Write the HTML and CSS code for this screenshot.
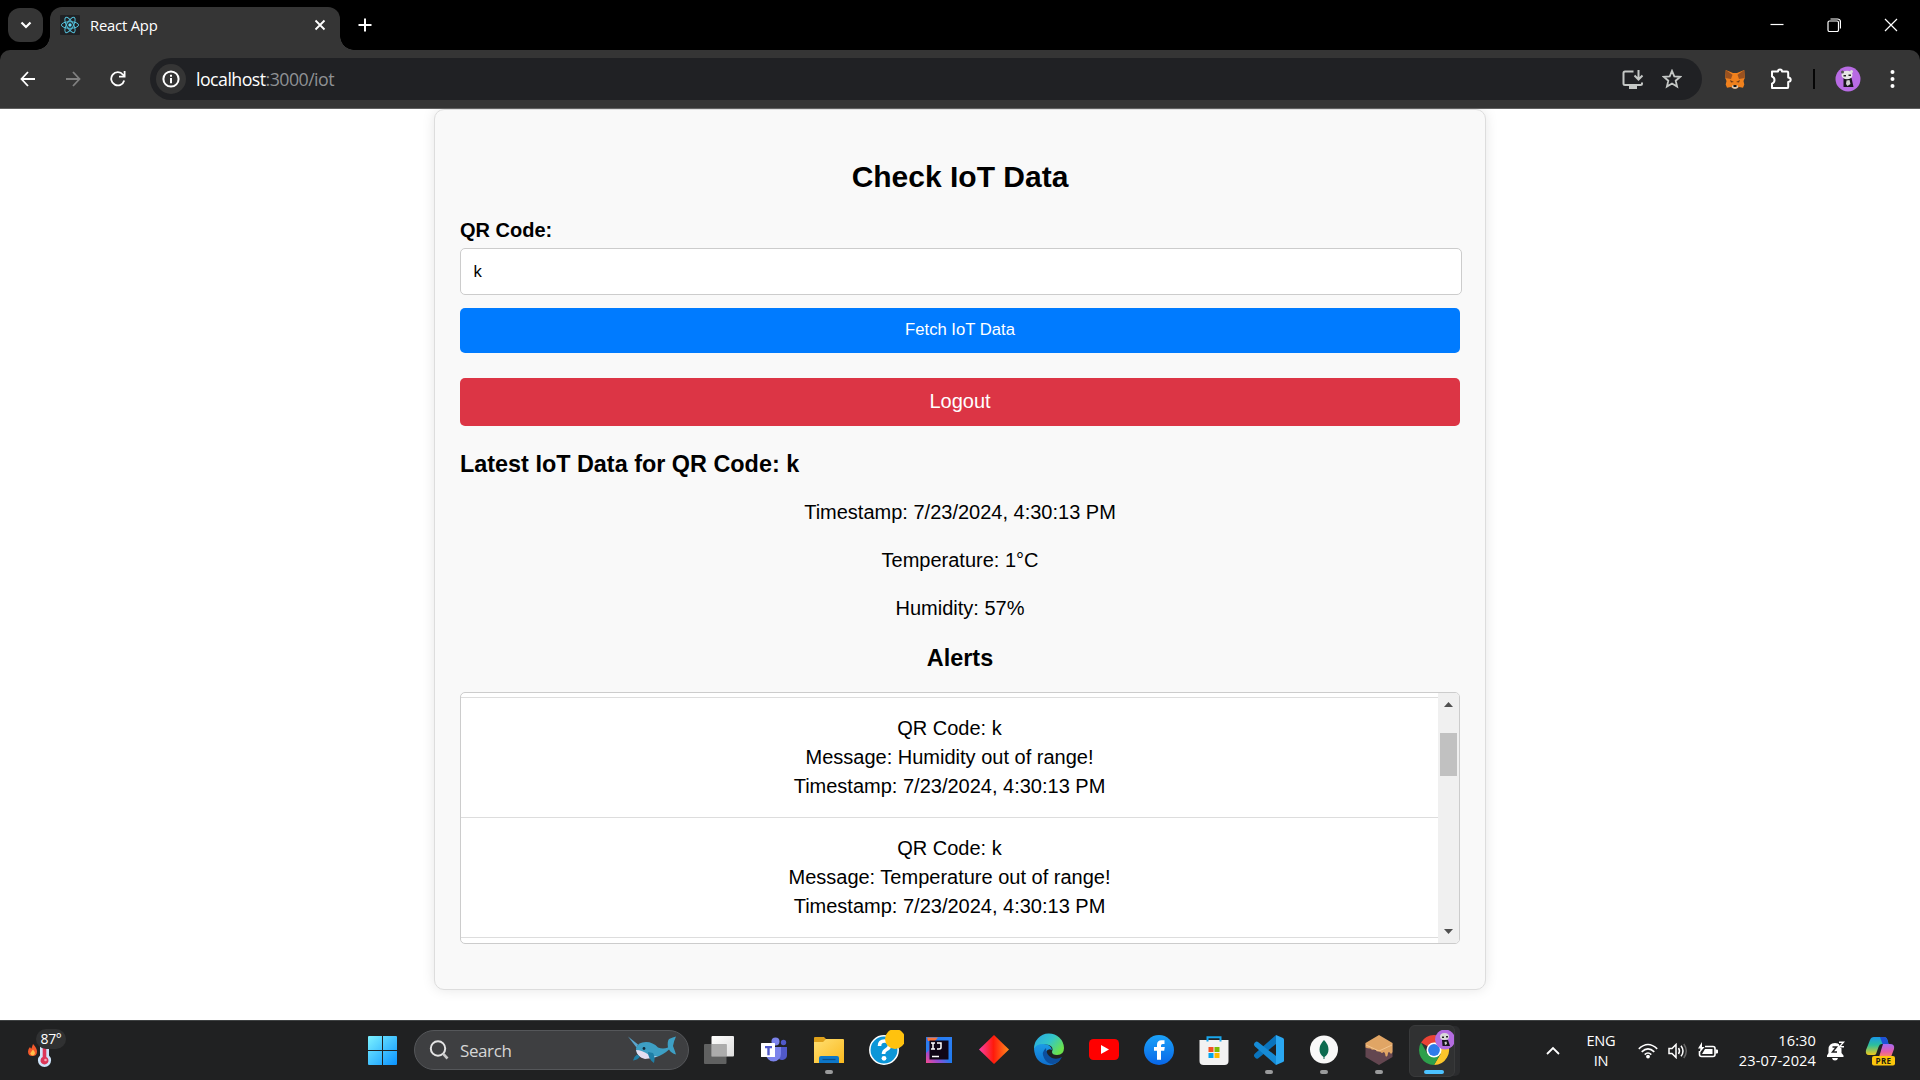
FILE: index.html
```html
<!DOCTYPE html>
<html lang="en">
<head>
<meta charset="utf-8">
<title>React App</title>
<link rel="stylesheet" href="styles.css">
</head>
<body>
<div class="tabstrip">
  <div class="tab-search"><svg width="12" height="8" viewBox="0 0 12 8"><path d="M1.5 1.5 6 6l4.500-4.500" fill="none" stroke="#fff" stroke-width="2.200"/></svg></div>
  <div class="tab">
    <svg class="favicon" width="20" height="20" viewBox="0 0 20 20"><rect width="20" height="20" rx="1" fill="#202124"/><g fill="none" stroke="#53bfd9" stroke-width="1"><ellipse cx="10" cy="10" rx="8.600" ry="3.300"/><ellipse cx="10" cy="10" rx="8.600" ry="3.300" transform="rotate(60 10 10)"/><ellipse cx="10" cy="10" rx="8.600" ry="3.300" transform="rotate(120 10 10)"/></g><circle cx="10" cy="10" r="1.700" fill="#61dafb"/></svg>
    <span class="tab-title">React App</span>
    <svg class="tab-close" width="12" height="12" viewBox="0 0 12 12"><path d="M1.500 1.500l9 9M10.500 1.500l-9 9" stroke="#fff" stroke-width="1.800"/></svg>
  </div>
  <svg class="new-tab" width="14" height="14" viewBox="0 0 14 14"><path d="M7 .5v13M.5 7h13" stroke="#fff" stroke-width="2"/></svg>
  <div class="window-buttons">
    <svg width="14" height="14" viewBox="0 0 14 14"><path d="M.5 6.500h13" stroke="#fff" stroke-width="1.200"/></svg>
    <svg width="14" height="14" viewBox="0 0 14 14"><path d="M3.500 1h7a3 3 0 0 1 3 3v6.500" fill="none" stroke="#fff" stroke-width="1.200"/><rect x="1" y="3" width="10.500" height="10.500" rx="1.500" fill="none" stroke="#fff" stroke-width="1.200"/></svg>
    <svg width="14" height="14" viewBox="0 0 14 14"><path d="M1 1l12 12M13 1L1 13" stroke="#fff" stroke-width="1.200"/></svg>
  </div>
</div>
<div class="toolbar-wrap">
<div class="toolbar">
  <svg class="nav" width="16" height="16" viewBox="0 0 16 16"><path d="M8 1L1.500 8 8 15M1.500 8H15" fill="none" stroke="#fff" stroke-width="1.800"/></svg>
  <svg class="nav" width="16" height="16" viewBox="0 0 16 16"><path d="M8 1l6.500 7L8 15M14.500 8H1" fill="none" stroke="#808080" stroke-width="1.800"/></svg>
  <svg class="nav" width="16" height="16" viewBox="0 0 16 16"><path d="M14.200 9.500A6.600 6.600 0 1 1 13 3.700L14.500 5.500" fill="none" stroke="#fff" stroke-width="1.800"/><path d="M15.500 0v6.500H9V4.800h4.700V0z" fill="#fff"/></svg>
  <div class="omnibox">
    <div class="info"><svg width="18" height="18" viewBox="0 0 18 18"><circle cx="9" cy="9" r="7.600" fill="none" stroke="#fff" stroke-width="2"/><path d="M9 8v5.300M9 4.700v2" stroke="#fff" stroke-width="2"/></svg></div>
    <span class="url">localhost<span class="path">:3000/iot</span></span>
    <svg class="install" width="22" height="19" viewBox="0 0 22 19"><path d="M11.500 1.500H3Q1.500 1.500 1.500 3v10.500Q1.500 15 3 15h15.500q1.500 0 1.500-1.500V12.500" fill="none" stroke="#c4c7c5" stroke-width="2"/><path d="M7 15h8v4H7z" fill="#c4c7c5"/><path d="M16.500 0v9M12.500 5.500l4 4 4-4" fill="none" stroke="#c4c7c5" stroke-width="2"/></svg>
    <svg class="star" width="20" height="20" viewBox="0 0 20 20"><path d="M10 1.800l2.300 5.500 6 .5-4.600 3.900 1.400 5.900L10 14.500l-5.100 3.100 1.400-5.900L1.700 7.800l6-.5z" fill="none" stroke="#c4c7c5" stroke-width="1.800"/></svg>
  </div>
  <svg class="fox" width="20" height="20" viewBox="0 0 20 20"><path d="M.8 1L8 4h4l7.200-3 .6 8-1.300 3 .8 3.500-1.300 3.300-4-.8-2 1.500H8L6 18l-4 .8L.7 15.500 1.500 12 .2 9z" fill="#f0811d"/><path d="M.8 1l6.700 4.700L6 10 .2 9zM19.200 1l-6.700 4.700L14 10l5.800-1z" fill="#9a5220"/><path d="M5 11l4 2-3 .5zM15 11l-4 2 3 .5z" fill="#713d18"/><path d="M7 16.500h6v2L11 19.700H9l-2-1.200z" fill="#d8c9b8"/><path d="M8.500 16h3v2h-3z" fill="#161616"/></svg>
  <svg class="puzzle" width="22" height="22" viewBox="0 0 22 22"><path d="M2 3.500h6Q8 1.500 10 1.500T12 3.500h5q1.200 0 1.200 1.200V9.500q2.500.3 2.500 2.200t-2.500 2.200v5q0 1.200-1.200 1.200H2v-4.500q2.500-1 2.500-3.600T2 8.500z" fill="none" stroke="#fff" stroke-width="2" stroke-linejoin="round"/></svg>
  <div class="separator"></div>
  <svg class="profile" width="26" height="26" viewBox="0 0 26 26"><circle cx="13" cy="13" r="12.500" fill="#b86be4"/><path d="M8.500 12h8l2 9h-10z" fill="#17151c"/><ellipse cx="12" cy="9" rx="5.500" ry="4.300" fill="#e6e6e6"/><circle cx="7.500" cy="6" r="1.500" fill="#555"/><circle cx="16.500" cy="5.500" r="1.500" fill="#ddd"/><path d="M8.500 9h2.500v1.500H8.500zM13.500 8.500h2.500v1.500h-2.500z" fill="#222"/><path d="M11.500 14.500l3-.5 1 4-3 2-1.500-2z" fill="#d0d0d0"/></svg>
  <svg class="kebab" width="5" height="20" viewBox="0 0 5 20"><g fill="#fff"><circle cx="2.500" cy="3" r="2"/><circle cx="2.500" cy="10" r="2"/><circle cx="2.500" cy="17" r="2"/></g></svg>
</div>
</div>

<main class="page">
  <section class="card">
    <h2 class="title">Check IoT Data</h2>
    <label class="label" for="qr">QR Code:</label>
    <input class="field" id="qr" type="text" value="k">
    <button class="btn btn-fetch">Fetch IoT Data</button>
    <button class="btn btn-logout">Logout</button>
    <h3 class="subtitle">Latest IoT Data for QR Code: k</h3>
    <p class="reading">Timestamp: 7/23/2024, 4:30:13 PM</p>
    <p class="reading">Temperature: 1°C</p>
    <p class="reading">Humidity: 57%</p>
    <h3 class="alerts-title">Alerts</h3>
    <div class="alerts">
      <div class="alerts-list">
        <div class="alert-end"></div>
        <div class="alert">QR Code: k<br>Message: Humidity out of range!<br>Timestamp: 7/23/2024, 4:30:13 PM</div>
        <div class="alert">QR Code: k<br>Message: Temperature out of range!<br>Timestamp: 7/23/2024, 4:30:13 PM</div>
      </div>
      <div class="scrollbar">
        <svg class="arrow-up" width="9" height="5" viewBox="0 0 9 5"><path d="M0 5L4.500 0 9 5z" fill="#505050"/></svg>
        <div class="thumb"></div>
        <svg class="arrow-down" width="9" height="5" viewBox="0 0 9 5"><path d="M0 0l4.500 5L9 0z" fill="#505050"/></svg>
      </div>
    </div>
  </section>
</main>

<footer class="taskbar">
  <div class="weather">
    <svg width="26" height="36" viewBox="0 0 26 36"><path d="M5 11q4 4 4 7.500Q9 23 4.500 23T0 18.500Q0 16 2 14q1 2 1.500 1.500Q4 14 5 11z" fill="#f2592b"/><path d="M5 16.500q2.500 2.500 1.800 4.500-.8 1.500-2.300 1.500T2.200 20.500Q3 19 5 16.500z" fill="#ffc04a"/><path d="M12 12h9v10.500a6.600 6.600 0 1 1-9 0z" fill="#cfe4fa"/><path d="M14.700 12h3.600v12a4 4 0 1 1-3.600 0z" fill="#dc3658"/><circle cx="17.500" cy="27" r="1.300" fill="#f6a5b6"/></svg>
    <span class="temp">87°</span>
  </div>
  <svg class="start" width="29" height="29" viewBox="0 0 29 29"><defs><linearGradient id="win" gradientUnits="userSpaceOnUse" x1="0" y1="0" x2="29" y2="29"><stop offset="0" stop-color="#7cf2ff"/><stop offset="1" stop-color="#0a93ff"/></linearGradient></defs><path d="M0 1q0-1 1-1h13v14H0zM15 0h13q1 0 1 1v13H15zM0 15h14v14H1q-1 0-1-1zM15 15h14v13q0 1-1 1H15z" fill="url(#win)"/></svg>
  <div class="search">
    <svg width="20" height="20" viewBox="0 0 20 20"><circle cx="9" cy="8.500" r="7.200" fill="none" stroke="#e4e4e4" stroke-width="2"/><path d="M14 13.700l4.500 4.800" stroke="#c9c9c9" stroke-width="2.600"/></svg>
    <span class="search-text">Search</span>
    <svg class="whale" width="50" height="30" viewBox="0 0 50 30"><path d="M1 1.500l10 8-1.500 3z" fill="#5aa7d0"/><path d="M9 13q2-6 10-6 7 0 12 5.500 5 2 10 0-1-6 1-8.500 4-2 7-2.500-2 4-3 9.500 2 5 3 8.500-5-1.500-7-5-5 5-14 8-11 2-16-2.500-3-2-3-7z" fill="#3d9fc4"/><path d="M9 15q6 0 13 5 3 2 9 1-6 3-13 3-8-2-9-9z" fill="#e3ddf0"/><path d="M10 19.500q-3 2-4 6 5-.5 7-4zM21 17q0 7 6 11 1.500-6-1-10z" fill="#1f7fa6"/><circle cx="17" cy="13.500" r="1.400" fill="#112b3c"/></svg>
  </div>
  <div class="apps">
    <div class="app"><svg width="40" height="40" viewBox="0 0 40 40"><defs><linearGradient id="tv" x2="1" y2="1"><stop stop-color="#fff"/><stop offset="1" stop-color="#ddd"/></linearGradient></defs><rect x="12.500" y="6" width="22.500" height="20.500" rx="1" fill="url(#tv)"/><rect x="5" y="14" width="22.500" height="20" rx="1" fill="#6f6f6f" opacity=".82"/><path d="M12.500 14h15v12.500h-15z" fill="#acacac"/></svg></div>
    <div class="app"><svg width="40" height="40" viewBox="0 0 40 40"><circle cx="21.500" cy="11.500" r="4" fill="#7b83eb"/><circle cx="29.500" cy="12.500" r="2.700" fill="#5059c9"/><path d="M24 17h9v8a5 5 0 0 1-9 3z" fill="#5059c9"/><path d="M12 17h15v7a7.500 7.500 0 0 1-15 0z" fill="#7b83eb"/><rect x="7" y="13" width="14" height="14" rx=".5" fill="#fff"/><path d="M11 16h7v2.200h-2.300v7h-2.400v-7H11z" fill="#5059c9"/></svg></div>
    <div class="app"><svg width="40" height="40" viewBox="0 0 40 40"><defs><linearGradient id="fd" x2="1" y2="1"><stop stop-color="#ffdf71"/><stop offset="1" stop-color="#fbb91e"/></linearGradient></defs><path d="M5 8q0-1 1-1h9l3 3-3 4H5z" fill="#dfa11a"/><path d="M5 12h9l3-3h17q1 0 1 1v23H5z" fill="url(#fd)"/><path d="M10 33v-5q0-2 2-2h16q2 0 2 2v5z" fill="#0d77c9"/><path d="M13.500 29.500h13" stroke="#0b4e88" stroke-width="1.200"/></svg><i class="running"></i></div>
    <div class="app"><svg width="40" height="40" viewBox="0 0 40 40"><circle cx="20" cy="20" r="14.200" fill="#0b96d8" stroke="#fff" stroke-width="1.500"/><path d="M15.500 16q0-5 5-5t5 4.500q0 2.500-3 4t-3 4.500" fill="none" stroke="#fff" stroke-width="3.600"/><circle cx="20" cy="28.300" r="2.400" fill="#fff"/><circle cx="31" cy="9" r="10" fill="#ffc20e"/></svg></div>
    <div class="app"><svg width="40" height="40" viewBox="0 0 40 40"><defs><linearGradient id="ij" x1="0" y1="1" x2="1" y2="0"><stop stop-color="#f84a8c"/><stop offset=".25" stop-color="#9a4bd0"/><stop offset=".5" stop-color="#1f7bf0"/><stop offset="1" stop-color="#2d7ff5"/></linearGradient></defs><rect x="7" y="7" width="26" height="26" fill="url(#ij)"/><path d="M8 7.500h11l-3 3.500H9z" fill="#f5743f"/><path d="M7 12l3-1v9l-3 3z" fill="#2a7df0"/><rect x="10.500" y="10.500" width="19" height="19" fill="#100616"/><path d="M12 13h4M14 13v6M12 19h4M18 13h4v4.500q0 1.500-2 1.500h-2M13 26.500h7" fill="none" stroke="#fff" stroke-width="1.500"/></svg></div>
    <div class="app"><svg width="40" height="40" viewBox="0 0 40 40"><defs><linearGradient id="dm" x2="1"><stop stop-color="#f83fa8"/><stop offset=".48" stop-color="#ff1a0c"/><stop offset="1" stop-color="#ff8a1c"/></linearGradient></defs><path d="M20 5l15 14.500L20 34 5 19.500z" fill="url(#dm)"/></svg></div>
    <div class="app"><svg width="40" height="40" viewBox="0 0 40 40"><defs><linearGradient id="ed" x2="1" y2=".6"><stop stop-color="#26a5e6"/><stop offset=".55" stop-color="#34c6c8"/><stop offset="1" stop-color="#6be24c"/></linearGradient><linearGradient id="eb" x2="0" y2="1"><stop stop-color="#1c9be6"/><stop offset="1" stop-color="#0f6fce"/></linearGradient></defs><path d="M5 19A15 15 0 0 1 35 18q0 7-7 7-5 0-5-3 2-5-3-7-6-2-15 4z" fill="url(#ed)"/><path d="M5 19q2-5 9-5 8 0 9 6-4-2-6 2-1 7 6 9 4 1 8-1-5 6-12 5Q6 33 5 19z" fill="url(#eb)"/><path d="M17 18q-5 4-2 10 3 6 9 6 6-1 9-7-5 3-10 1-6-3-6-10z" fill="#0c4f9e"/></svg></div>
    <div class="app"><svg width="40" height="40" viewBox="0 0 40 40"><rect x="5" y="9" width="30" height="21" rx="4.500" fill="#f00"/><path d="M17 15l8 4.500-8 4.500z" fill="#fff"/></svg></div>
    <div class="app"><svg width="40" height="40" viewBox="0 0 40 40"><defs><linearGradient id="fb" x2="0" y2="1"><stop stop-color="#1ba2f8"/><stop offset="1" stop-color="#0866e8"/></linearGradient></defs><circle cx="20" cy="20" r="15" fill="url(#fb)"/><path d="M25.500 10.300h-3q-4.500 0-4.500 4.500V17h-3v3.700h3v9h4v-9h3.200l.6-3.700H22v-1.500q0-1.600 1.500-1.600h2z" fill="#fff"/></svg></div>
    <div class="app"><svg width="40" height="40" viewBox="0 0 40 40"><path d="M5.500 10h29v21q0 4-4 4h-21q-4 0-4-4z" fill="#f2f2f2"/><path d="M14.500 17h5v5h-5z" fill="#f25022"/><path d="M20.500 17h5v5h-5z" fill="#7fba00"/><path d="M14.500 23h5v5h-5z" fill="#00a4ef"/><path d="M20.500 23h5v5h-5z" fill="#ffb900"/><path d="M13.500 11.500V7.200h13v4.300" fill="none" stroke="#18a6ec" stroke-width="2"/></svg></div>
    <div class="app"><svg width="40" height="40" viewBox="0 0 40 40"><path d="M27 5v9L9 28.500q-1.500 1-3-1l-.8-1q-.7-1.500.8-3z" fill="#0a74bd"/><path d="M27 35v-9L9 12q-1.500-1-3 .5l-.8 1q-.7 1.500.8 3z" fill="#168bd6"/><path d="M27 5l7 3q1 .5 1 1.500v21q0 1-1 1.500l-7 3z" fill="#2aa7f1"/></svg><i class="running"></i></div>
    <div class="app"><svg width="40" height="40" viewBox="0 0 40 40"><circle cx="20" cy="19.500" r="14" fill="#f8f8f8"/><path d="M20 10q4.500 4.500 4.500 9.500 0 4.500-4 7.500V29h-1v-2q-4-3-4-7.500 0-5 4.500-9.500z" fill="#0d6b50"/></svg><i class="running"></i></div>
    <div class="app"><svg width="40" height="40" viewBox="0 0 40 40"><path d="M6.500 13L20 20l13.500-7v14L20 35 6.500 27z" fill="#634650"/><path d="M20 5l13.500 8v9q-1 3-2.500 1-1-2-2 0-.5 5-2.500 3-.5-4-2-4-1.500 2-3 0-2-1-3.500-.5-1.500-2.500-3-2-2 1-3.500-1-3 0-5-1V13z" fill="#e0a565"/><path d="M7 15l13 6 13-6" fill="none" stroke="#f3c58f" stroke-width="1"/></svg><i class="running"></i></div>
    <div class="app active"><svg width="40" height="40" viewBox="0 0 40 40"><path d="M20 20L7.010 12.500A15 15 0 0 1 32.990 12.500z" fill="#ea4335"/><path d="M20 12.500h13A15 15 0 0 1 20 35l6.500-11z" fill="#fcc62b"/><path d="M7.010 12.500A15 15 0 0 0 20 35l6.500-11.200L20 20l-6.500 3.700z" fill="#2da04b"/><circle cx="20" cy="20" r="7.500" fill="#fff"/><circle cx="20" cy="20" r="5.900" fill="#2f7bea"/><circle cx="31" cy="9.500" r="10" fill="#b36be0"/><path d="M28 10h6l2 6h-7.500z" fill="#17151c"/><ellipse cx="30.500" cy="6.500" rx="4.500" ry="3.500" fill="#d8d8d8"/><path d="M28 6.500h2V8h-2zM32 6h2v1.500h-2z" fill="#222"/><path d="M30.500 12l2-.5.5 2.500-2 1z" fill="#ccc"/></svg><i class="running current"></i></div>
  </div>
  <div class="tray">
    <svg class="chevron" width="14" height="9" viewBox="0 0 14 9"><path d="M1 8l6-6 6 6" fill="none" stroke="#fff" stroke-width="1.800"/></svg>
    <div class="lang"><span>ENG</span><span>IN</span></div>
    <svg class="wifi" width="20" height="16" viewBox="0 0 20 16"><g fill="none" stroke="#fff" stroke-width="1.600"><path d="M.8 5.800q9.200-8.600 18.400 0M3.700 8.800q6.300-6 12.600 0M6.700 11.600q3.300-3.200 6.600 0"/></g><circle cx="10" cy="13.600" r="1.900" fill="#fff"/></svg>
    <svg class="speaker" width="20" height="16" viewBox="0 0 20 16"><path d="M1 5.500h3L8 1.500v13L4 10.500H1z" fill="none" stroke="#fff" stroke-width="1.500"/><path d="M10.500 5q2 3 0 6M13 2.700q4 5.300 0 10.600" fill="none" stroke="#fff" stroke-width="1.500"/><path d="M15.800 1q5 7 0 14" fill="none" stroke="#666" stroke-width="1.500"/></svg>
    <svg class="battery" width="20" height="17" viewBox="0 0 20 17"><path d="M7 4.500h8q2 0 2 2v6q0 2-2 2H3.500q-2 0-2-2V9" fill="none" stroke="#fff" stroke-width="1.600"/><path d="M7 7h7.500v5H4z" fill="#fff"/><path d="M17.500 7.500h1.500q1 0 1 1v2q0 1-1 1h-1.500zM4 0L0 6.500h2.500L1.500 11 6.500 5H4z" fill="#fff"/></svg>
    <div class="clock"><span>16:30</span><span>23-07-2024</span></div>
    <svg class="bell" width="18" height="20" viewBox="0 0 18 20"><path d="M1.500 12V8.500Q1.500 2 8 2q6.500 0 6.500 6.500V12l2 2.500v1.500H0V14.500zM5 17h6q-.5 2.500-3 2.500T5 17z" fill="#fff"/><path d="M5.500 6h4l-4 5h4.500" fill="none" stroke="#202122" stroke-width="1.500"/><path d="M10.500 0h7v7h-4z" fill="#202122"/><path d="M12 1.200h4.500l-4 4.500H17" fill="none" stroke="#fff" stroke-width="1.400"/></svg>
    <svg class="copilot" width="30" height="30" viewBox="0 0 30 30"><defs><linearGradient id="ca" x2="0" y2="1"><stop stop-color="#1998e8"/><stop offset=".45" stop-color="#2cbf9c"/><stop offset="1" stop-color="#f2c91a"/></linearGradient><linearGradient id="cb" x2="0" y2="1"><stop stop-color="#a56bf3"/><stop offset=".6" stop-color="#e65ba8"/><stop offset="1" stop-color="#ff8a5c"/></linearGradient></defs><path d="M9 1h10q2.500 0 3.500 3l1 4h-7q-2 0-3 3l-2.500 7q-.5 1-2 1H4q-4 0-3-5L5 4q1-3 4-3z" fill="url(#ca)"/><path d="M15 1h4q2.500 0 3.500 3l1 4h-6z" fill="#1f51d6"/><path d="M18 8h7q5 0 4 5l-3 8H14z" fill="url(#cb)"/><rect x="7" y="20" width="23" height="9.500" rx="2" fill="#fcc60c"/><text x="18.500" y="27.700" text-anchor="middle" class="pre">PRE</text></svg>
  </div>
</footer>
</body>
</html>
```
FILE: styles.css
```css
* { box-sizing: border-box; }
body {
  margin: 0;
  width: 1920px;
  height: 1080px;
  overflow: hidden;
  display: flex;
  flex-direction: column;
  background: #fff;
  font-family: "Liberation Sans", Arial, sans-serif;
  font-size: 20px;
  color: #000;
}
svg { display: block; flex: none; }

/* Browser window */
.tabstrip {
  height: 50px;
  flex: none;
  background: #000;
  display: flex;
  align-items: flex-start;
  padding-left: 8px;
}
.tab-search {
  width: 35px;
  height: 34px;
  margin-top: 8px;
  border-radius: 12px;
  background: #353535;
  display: flex;
  align-items: center;
  justify-content: center;
}
.tab {
  position: relative;
  width: 290px;
  height: 43px;
  margin: 7px 0 0 7px;
  padding: 0 14px 7px 10px;
  border-radius: 12px 12px 0 0;
  background: #353535;
  display: flex;
  align-items: center;
}
.tab::before, .tab::after {
  content: "";
  position: absolute;
  bottom: 0;
  width: 14px;
  height: 14px;
}
.tab::before { left: -14px; background: radial-gradient(circle at 0 0, transparent 13.5px, #353535 14px); }
.tab::after { right: -14px; background: radial-gradient(circle at 100% 0, transparent 13.5px, #353535 14px); }
.tab-title {
  margin-left: 10px;
  flex: 1;
  font: 14.800px/20px "Open Sans", sans-serif;
  letter-spacing: -0.200px;
  color: #fff;
}
.new-tab { margin: 18px 0 0 18px; }
.window-buttons { display: flex; gap: 43px; margin: 18px 22px 0 auto; }
.toolbar-wrap { flex: none; background: #000; }
.toolbar {
  height: 59px;
  background: #353535;
  border-bottom: 1px solid #606060;
  border-radius: 10px 10px 0 0;
  display: flex;
  align-items: center;
  padding: 0 25px 0 20px;
}
.nav { margin: 0 29px 0 0; }
.omnibox {
  width: 1552px;
  height: 42px;
  margin-left: -5px;
  padding: 0 20px 0 6px;
  border-radius: 21px;
  background: #202124;
  display: flex;
  align-items: center;
}
.info {
  width: 30px;
  height: 30px;
  border-radius: 50%;
  background: #353535;
  display: flex;
  align-items: center;
  justify-content: center;
}
.url {
  margin-left: 10px;
  flex: 1;
  font: 17.800px/24px "Open Sans", sans-serif;
  letter-spacing: -0.550px;
  color: #fff;
}
.path { color: #8f9194; }
.install { margin-right: 18px; }
.star { margin: 0; }
.fox { margin-left: 23px; }
.puzzle { margin-left: 25px; }
.separator { width: 2px; height: 20px; margin-left: 21px; background: #050505; }
.profile { margin-left: 20px; }
.kebab { margin-left: auto; }

/* IoT page */
.page {
  height: 911px;
  flex: none;
  overflow: hidden;
  display: flex;
  justify-content: center;
  align-items: flex-start;
}
.card {
  width: 1052px;
  height: 881px;
  padding: 25px;
  border: 1px solid #ddd;
  border-radius: 10px;
  background: #f9f9f9;
  box-shadow: 0 0 12.500px rgba(0, 0, 0, 0.1);
}
.title { margin: 25px 0; font-size: 30px; line-height: 34px; text-align: center; }
.label { display: block; line-height: 23px; font-weight: bold; margin-bottom: 6px; }
.field {
  display: block;
  width: 1002px;
  height: 47px;
  padding: 0 12.500px;
  border: 1px solid #ccc;
  border-radius: 5px;
  background: #fff;
  color: #000;
  font: 16.667px "Liberation Sans", Arial, sans-serif;
}
.btn {
  display: block;
  width: 100%;
  border: 0;
  border-radius: 5px;
  color: #fff;
  font-family: inherit;
}
.btn-fetch { height: 45px; margin-top: 13px; padding: 0 0 2px; background: #007bff; font-size: 16.667px; }
.btn-logout { height: 48px; margin-top: 25px; padding: 0 0 1px; background: #dc3545; font-size: 20px; }
.subtitle { margin: 25px 0 23px; font-size: 23.400px; line-height: 27px; }
.reading { margin: 0 0 25px; line-height: 23px; text-align: center; }
.alerts-title { margin: 0 0 20px; font-size: 23.400px; line-height: 27px; text-align: center; }
.alerts {
  height: 252px;
  border: 1px solid #ccc;
  border-radius: 5px;
  overflow: hidden;
  background: #fff;
  display: flex;
}
.alerts-list { flex: 1; }
.alert-end { height: 5px; border-bottom: 1px solid #ddd; }
.alert { height: 120px; padding: 16px 0; border-bottom: 1px solid #ddd; line-height: 29px; text-align: center; }
.scrollbar {
  width: 21px;
  background: #f0f0f0;
  display: flex;
  flex-direction: column;
  align-items: center;
  padding: 9px 0;
}
.thumb { width: 17px; height: 43px; margin-top: 26px; background: #c1c1c1; }
.arrow-down { margin-top: auto; }

/* Taskbar */
.taskbar {
  height: 60px;
  flex: none;
  background: #202122;
  border-top: 1px solid #3e4142;
  display: flex;
  align-items: center;
  font-family: "Open Sans", sans-serif;
  color: #fff;
}
.weather { position: relative; width: 340px; padding-left: 28px; }
.temp {
  position: absolute;
  left: 36px;
  top: -4px;
  width: 30px;
  height: 20px;
  border-radius: 10px;
  background: #303132;
  font: 14px/20px "Open Sans", sans-serif;
  letter-spacing: -0.300px;
  text-align: center;
}
.start { margin-left: 28px; }
.search {
  width: 275px;
  height: 40px;
  margin: 0 0 1px 17px;
  padding: 0 11px 0 14px;
  border: 1px solid #55575a;
  border-radius: 20px;
  background: #3e3f41;
  display: flex;
  align-items: center;
}
.search-text { margin-left: 11px; flex: 1; font-size: 17px; letter-spacing: -0.400px; color: #d6d6d6; }
.apps { display: flex; height: 59px; margin-left: 3px; }
.app {
  position: relative;
  width: 55px;
  height: 59px;
  display: flex;
  justify-content: center;
  padding-top: 9px;
}
.app svg { position: relative; left: -0.500px; }
.active::before {
  content: "";
  position: absolute;
  left: 2px;
  top: 4px;
  width: 44px;
  height: 50px;
  border: 1px solid #393a3b;
  border-radius: 6px;
  background: #303132;
  box-shadow: 6px 0 0 -1px #2b2c2e;
}
.running {
  position: absolute;
  left: 23px;
  top: 49px;
  width: 8px;
  height: 4px;
  border-radius: 2px;
  background: #9a9b9c;
}
.current { left: 17px; width: 20px; background: #4cc2ff; }
.tray { display: flex; align-items: center; margin-left: 84px; flex: 1; }
.lang { width: 36px; margin-left: 23px; text-align: center; }
.lang, .clock { display: flex; flex-direction: column; font-size: 14.600px; line-height: 20px; padding-bottom: 1px; }
.lang { letter-spacing: -0.250px; }
.clock { width: 84px; margin-left: 14px; text-align: right; letter-spacing: 0.100px; }
.wifi { margin-left: 19px; }
.speaker { margin-left: 10px; }
.battery { margin-left: 10px; }
.bell { margin-left: 11px; }
.copilot { margin-left: 20px; }
.pre { font: bold 8px "Open Sans", sans-serif; letter-spacing: 0.400px; fill: #201c10; }
```
